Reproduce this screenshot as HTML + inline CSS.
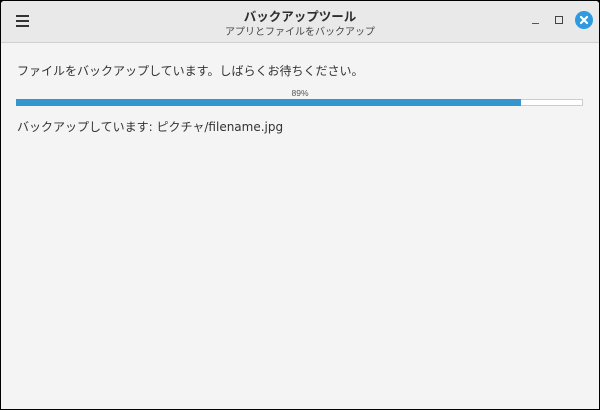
<!DOCTYPE html>
<html><head><meta charset="utf-8"><style>
*{margin:0;padding:0;box-sizing:border-box}
body{width:600px;height:410px;background:#000;font-family:"Liberation Sans","Noto Sans CJK JP",sans-serif;overflow:hidden}
.win{position:absolute;left:1px;top:1px;width:598px;height:408px;background:#f4f4f4;border-radius:3px 3px 0 0;overflow:hidden}
.hdr{position:absolute;left:0;top:0;width:598px;height:42px;background:#e9e9e9;border-bottom:1px solid #cfcfcf}
.t1{position:absolute;top:5px;left:0;width:598px;text-align:center;font-size:12.5px;font-weight:bold;color:#2e2e2e}
.t2{position:absolute;top:22px;left:0;width:598px;text-align:center;font-size:10px;color:#444}
.ham{position:absolute;left:15px;width:13px;height:2px;background:#333}
.txt{position:absolute;left:16px;font-size:12px;color:#333}
</style></head><body><div class="win">
<div class="hdr">
<div class="ham" style="top:14px"></div><div class="ham" style="top:19px"></div><div class="ham" style="top:24px"></div>
<div class="t1">バックアップツール</div>
<div class="t2">アプリとファイルをバックアップ</div>
<div style="position:absolute;left:531px;top:22px;width:7px;height:1px;background:#555"></div>
<div style="position:absolute;left:554px;top:15px;width:8px;height:8px;border:1px solid #444"></div>
<div style="position:absolute;left:574px;top:10px;width:18px;height:18px;border-radius:50%;background:#2f9ae0"></div>
<svg style="position:absolute;left:574px;top:10px" width="18" height="18"><path d="M6 6L12 12M12 6L6 12" stroke="#fff" stroke-width="2.2" stroke-linecap="round"/></svg>
</div>
<div class="txt" style="top:61px">ファイルをバックアップしています。しばらくお待ちください。</div>
<div style="position:absolute;left:0;top:87px;width:598px;text-align:center;font-size:8.5px;color:#555">89%</div>
<div style="position:absolute;left:15px;top:98px;width:567px;height:7px;background:#fff;border:1px solid #ccc"></div>
<div style="position:absolute;left:15px;top:98px;width:505px;height:7px;background:#3596cf"></div>
<div class="txt" style="top:117px;font-family:'DejaVu Sans','Noto Sans CJK JP',sans-serif;font-size:12px">バックアップしています: ピクチャ/filename.jpg</div>
</div></body></html>
